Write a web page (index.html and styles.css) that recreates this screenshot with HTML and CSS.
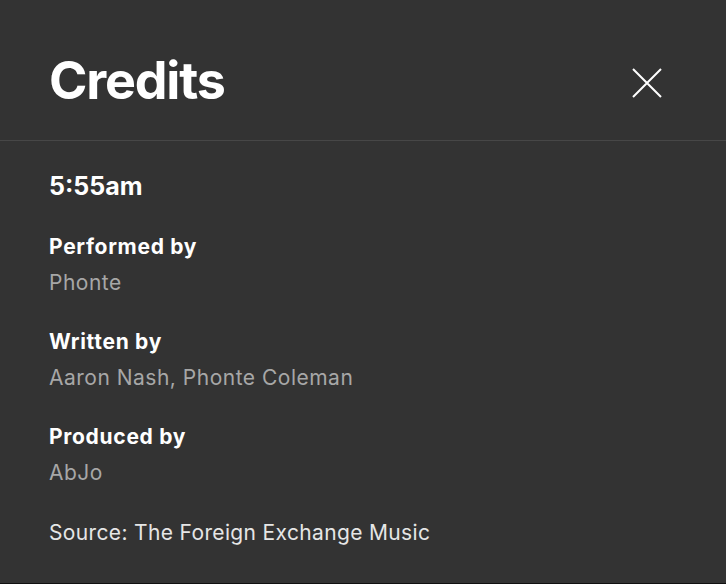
FILE: index.html
```html
<!DOCTYPE html>
<html>
<head>
<meta charset="utf-8">
<link rel="stylesheet" href="styles.css">
</head>
<body>
<div class="modal">
  <header class="head">
    <h1 class="title">Credits</h1>
    <button class="close" aria-label="Close">
      <svg width="30" height="30" viewBox="0 0 30 30"><path d="M1 1L29 29M29 1L1 29" stroke="#fff" stroke-width="2" fill="none"/></svg>
    </button>
  </header>
  <div class="body">
    <div class="track">5:55am</div>
    <div class="group">
      <div class="label">Performed by</div>
      <div class="value">Phonte</div>
    </div>
    <div class="group">
      <div class="label">Written by</div>
      <div class="value">Aaron Nash, Phonte Coleman</div>
    </div>
    <div class="group">
      <div class="label">Produced by</div>
      <div class="value">AbJo</div>
    </div>
    <div class="source">Source: The Foreign Exchange Music</div>
  </div>
</div>
</body>
</html>
```
FILE: styles.css
```css
html, body { margin: 0; padding: 0; }
body { background: #333333; font-family: "Inter", "Noto Sans", sans-serif; color: #fff; }
.modal { width: 726px; height: 584px; box-sizing: border-box; border-bottom: 1px solid #111; display: flex; flex-direction: column; }
.head { height: 141px; box-sizing: border-box; border-bottom: 1px solid #474747; display: flex; align-items: flex-start; justify-content: space-between; padding: 51px 64px 0 49px; }
.title { margin: 0; font-size: 52px; font-weight: 700; line-height: 60px; letter-spacing: -1.2px; }
.close { background: none; border: 0; padding: 0; width: 30px; height: 30px; margin-top: 17px; display: flex; }
.body { padding: 30px 49px 0; display: flex; flex-direction: column; }
.track { font-size: 25px; font-weight: 700; line-height: 30px; margin-bottom: 32px; }
.group { display: flex; flex-direction: column; gap: 8px; margin-bottom: 31px; }
.label { font-size: 21px; font-weight: 700; line-height: 28px; letter-spacing: 0.7px; }
.value { font-size: 21px; color: #a7a7a7; line-height: 28px; letter-spacing: 0.5px; }
.source { font-size: 21px; color: #e6e6e6; line-height: 28px; letter-spacing: 0.35px; margin-top: 1px; }
```
